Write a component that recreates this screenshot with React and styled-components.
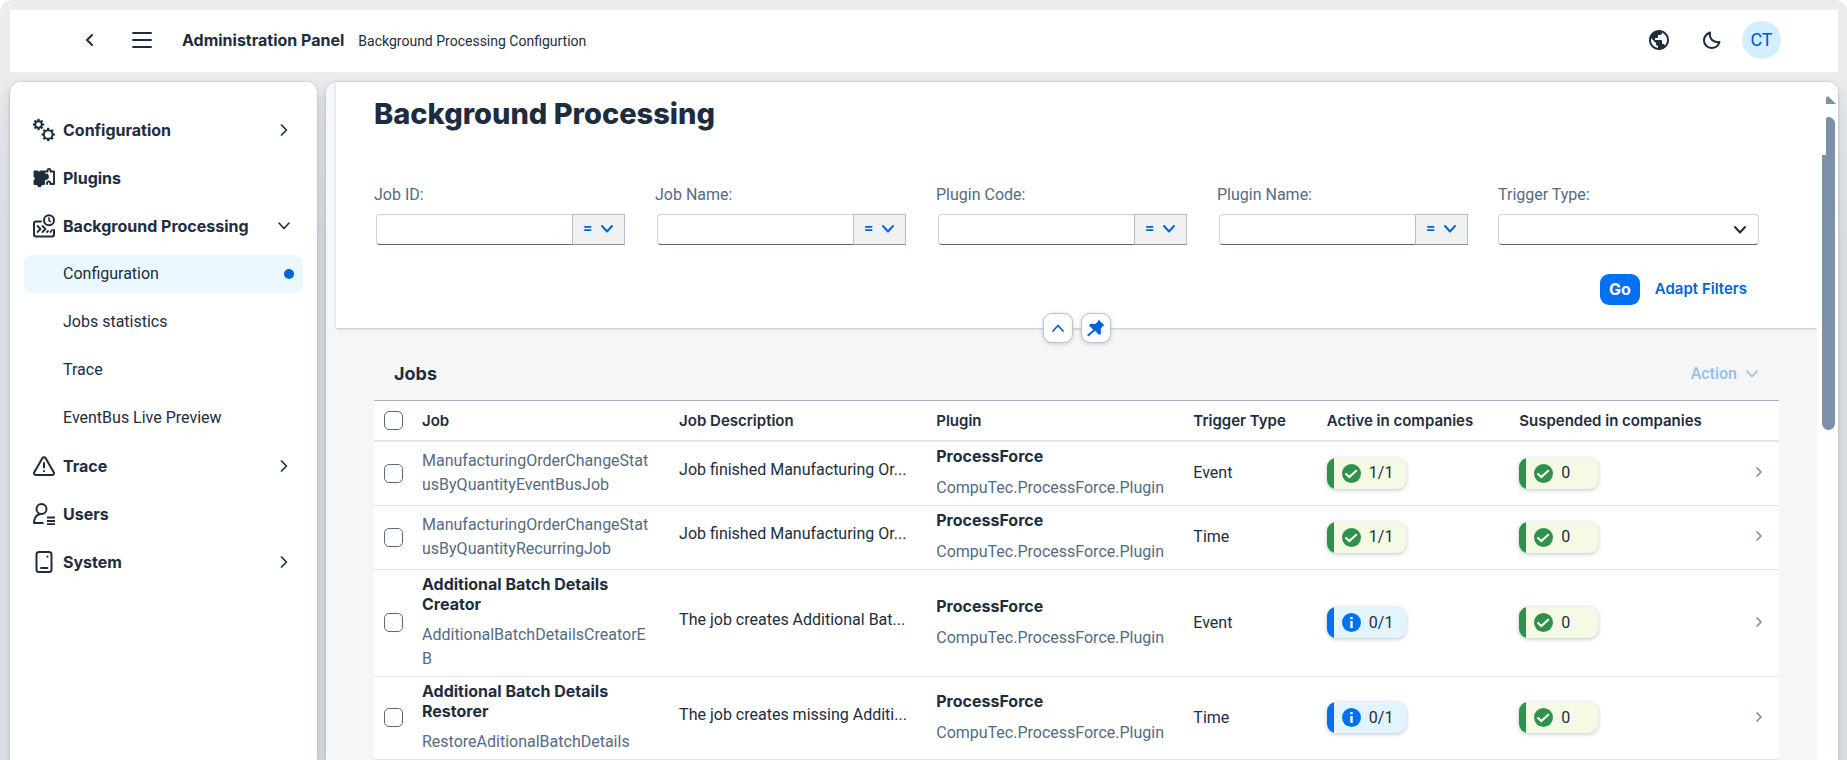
import React from 'react';
import styled, { createGlobalStyle, css } from 'styled-components';

const strongFont = 'Inter, Roboto, "Liberation Sans", sans-serif';

const Global = createGlobalStyle`
  *, *::before, *::after { box-sizing: border-box; }
  html, body, #root { height: 100%; }
  body {
    margin: 0;
    overflow: hidden;
    background: #fff;
    color: #1d2d3e;
    font: 400 16px/24px Roboto, "Liberation Sans", sans-serif;
  }
  button, input, select { font: inherit; color: inherit; }
`;

const Shell = styled.div`
  height: 100%;
  display: flex;
  flex-direction: column;
  gap: 10px;
  padding: 10px 9px 0 10px;
  background: linear-gradient(#eaecee 72px, #dfe3e6 240px);
  border-radius: 12px 12px 0 0;
`;

const TopBar = styled.header`
  flex: none;
  height: 62px;
  display: flex;
  align-items: center;
  gap: 25px;
  padding: 0 57px 2px 65px;
  background: #fff;
`;

const IconButton = styled.button`
  display: grid;
  place-items: center;
  width: 28px;
  height: 28px;
  padding: 0;
  border: 0;
  background: none;
  color: #1d2d3e;
`;

const Titles = styled.div`
  flex: 1;
  display: flex;
  align-items: baseline;
  gap: 14px;
  margin-left: 1px;
`;

const AppTitle = styled.span`
  font-family: ${strongFont};
  font-size: 16px;
  font-weight: 700;
`;

const SubTitle = styled.span`
  font-size: 14px;
`;

const Avatar = styled.button`
  width: 39px;
  height: 38px;
  margin-left: -9px;
  padding: 0;
  border: 0;
  border-radius: 50%;
  background: #d1efff;
  color: #0057d2;
  font-size: 18px;
`;

const Body = styled.div`
  flex: 1;
  min-height: 0;
  display: flex;
  gap: 9px;
`;

const Side = styled.nav`
  flex: none;
  width: 307px;
  padding: 29px 14px;
  background: #fff;
  border-radius: 10px 10px 0 0;
  box-shadow: 0 0 3px rgba(34, 53, 72, 0.2), 0 8px 16px rgba(34, 53, 72, 0.16);
`;

const NavList = styled.ul`
  display: flex;
  flex-direction: column;
  gap: 10px;
  margin: 0;
  padding: 0;
  list-style: none;
`;

const NavLink = styled.a`
  display: flex;
  align-items: center;
  gap: 8px;
  height: 38px;
  padding: 0 9px;
  border-radius: 8px;
  color: inherit;
  text-decoration: none;
  background: ${(p) => (p.$selected ? '#ebf8ff' : 'none')};
  ${(p) => !p.$sub && css`
    font-family: ${strongFont};
    font-weight: 700;
    line-height: 22px;
  `}
`;

const NavIcon = styled.span`
  flex: none;
  width: 22px;
  height: 24px;
  display: grid;
  place-items: center;
`;

const NavText = styled.span`
  flex: 1;
`;

const Dot = styled.span`
  width: 10px;
  height: 10px;
  border-radius: 50%;
  background: #0064d9;
`;

const ChevronSlot = styled.span`
  display: grid;
  place-items: center;
  width: 20px;
`;

const Panel = styled.main`
  flex: 1;
  min-width: 0;
  display: flex;
  padding-left: 10px;
  background: #f5f6f7;
  border-radius: 10px 10px 0 0;
  overflow: hidden;
  box-shadow: 0 0 3px rgba(34, 53, 72, 0.2), 0 8px 16px rgba(34, 53, 72, 0.16);
`;

const Page = styled.div`
  flex: 1;
  min-width: 0;
  display: flex;
  flex-direction: column;
`;

const Track = styled.div`
  flex: none;
  position: relative;
  width: 21px;
  padding: 14px 3px 0 5px;
  background: #fff;
  display: flex;
  flex-direction: column;
  align-items: flex-end;
`;

const Arrow = styled.svg`
  display: block;
  flex: none;
  margin-right: -1px;
`;

const ThumbTop = styled.div`
  flex: none;
  width: 9px;
  height: 38px;
  margin-top: 13px;
  background: #7b91a8;
  border-radius: 3px 8px 0 0;
`;

const Thumb = styled.div`
  flex: none;
  width: 13px;
  height: 275px;
  background: #7b91a8;
  border-radius: 0 0 7px 7px;
`;

const FilterHeader = styled.section`
  position: relative;
  flex: none;
  height: 246px;
  padding: 12px 38px 0;
  background: #fff;
  box-shadow: 0 1px 2px rgba(34, 53, 72, 0.25);
`;

const Heading = styled.h1`
  margin: 0;
  font-family: ${strongFont};
  font-size: 29px;
  line-height: 40px;
  font-weight: 800;
`;

const Filters = styled.div`
  display: grid;
  grid-template-columns: repeat(5, minmax(0, 1fr));
  margin-top: 49px;
`;

const Field = styled.div`
  display: flex;
  flex-direction: column;
  gap: 7px;
  color: #556b82;
`;

const InputGroup = styled.div`
  display: flex;
  height: 31px;
  margin: 0 30px 0 2px;
`;

const TextInput = styled.input`
  flex: 1;
  min-width: 0;
  padding: 0 8px;
  border: 1px solid #ccd4dc;
  border-right: 0;
  border-bottom-color: #556b82;
  border-radius: 4px 0 0 4px;
  background: #fff;
  outline: 0;
`;

const Operator = styled.button`
  flex: none;
  width: 53px;
  display: flex;
  align-items: center;
  justify-content: center;
  gap: 8px;
  padding: 0 0 2px;
  border: 1px solid #b5bfc9;
  border-bottom-color: #7b91a8;
  background: #eff1f2;
  color: #0064d9;
  font-weight: 700;
`;

const SelectWrap = styled.div`
  display: grid;
  align-items: center;
  height: 31px;
  margin-right: 20px;
  > * { grid-area: 1 / 1; }
  > svg { justify-self: end; margin-right: 12px; pointer-events: none; color: #1d2d3e; }
`;

const Select = styled.select`
  appearance: none;
  width: 100%;
  height: 31px;
  padding: 0 32px 0 8px;
  border: 1px solid #ccd4dc;
  border-bottom-color: #556b82;
  border-radius: 4px;
  background: #fff;
  outline: 0;
`;

const Actions = styled.div`
  display: flex;
  justify-content: flex-end;
  align-items: center;
  gap: 15px;
  margin-top: 29px;
  padding-right: 32px;
`;

const GoButton = styled.button`
  width: 40px;
  height: 31px;
  padding: 0 0 2px;
  border: 0;
  border-radius: 9px;
  background: #0070f2;
  color: #fff;
  font-family: ${strongFont};
  font-weight: 700;
`;

const LinkButton = styled.button`
  padding: 0 0 2px;
  border: 0;
  background: none;
  color: #0064d9;
  font-family: ${strongFont};
  font-size: 15px;
  font-weight: 600;
`;

const HeaderToggles = styled.div`
  position: absolute;
  left: 0;
  right: 0;
  bottom: -15px;
  display: flex;
  justify-content: center;
  gap: 8px;
`;

const ToggleButton = styled.button`
  display: grid;
  place-items: center;
  width: 30px;
  height: 30px;
  padding: 0;
  border: 1px solid #bcc3ca;
  border-radius: 9px;
  background: #fff;
  color: #0064d9;
  box-shadow: 0 1px 4px rgba(85, 107, 130, 0.3);
`;

const JobsSection = styled.section`
  padding: 24px 38px 0;
`;

const Toolbar = styled.div`
  display: flex;
  align-items: center;
  justify-content: space-between;
  height: 48px;
  padding: 0 20px 4px;
`;

const Subheading = styled.h2`
  margin: 0;
  font-family: ${strongFont};
  font-size: 18px;
  line-height: 24px;
  font-weight: 700;
`;

const ActionButton = styled.button`
  display: flex;
  align-items: center;
  gap: 8px;
  padding: 0;
  border: 0;
  background: none;
  color: #97bdef;
  font-weight: 500;
`;

const Table = styled.table`
  width: 100%;
  table-layout: fixed;
  border-collapse: separate;
  border-spacing: 0;
  background: #fff;
  border-top: 1px solid #a3b1bf;
`;

const Col = styled.col`
  width: ${(p) => p.$w};
`;

const Th = styled.th`
  height: 41px;
  padding: 0 8px;
  border-bottom: 2px solid #e5e5e5;
  text-align: left;
  font-family: ${strongFont};
  font-size: 15px;
  font-weight: 600;
  white-space: nowrap;
`;

const Td = styled.td`
  padding: 4px 16px 5px 8px;
  border-bottom: 1px solid #e5e5e5;
  vertical-align: middle;
`;

const PluginTd = styled(Td)`
  padding-right: 8px;
`;

const NavTd = styled(Td)`
  padding: 0 16px 4px 0;
  text-align: right;
  color: #7b91a8;
  svg { display: inline-block; vertical-align: middle; }
`;

const Checkbox = styled.input`
  appearance: none;
  display: block;
  width: 19px;
  height: 19px;
  margin: 0 2px;
  border: 1px solid #556b82;
  border-radius: 5px;
  background: #fff;
`;

const Name = styled.div`
  margin-bottom: ${(p) => (p.$wrap ? 9 : 10)}px;
  font-family: ${strongFont};
  font-weight: 700;
  line-height: 20px;
`;

const Code = styled.div`
  color: #556b82;
  overflow-wrap: anywhere;
  line-height: 24px;
`;

const Description = styled.div`
  margin-bottom: 6px;
  white-space: nowrap;
`;

const tones = {
  good: css`
    background: #f5fae5;
    &::before { background: #30914c; }
    svg { color: #30914c; }
  `,
  info: css`
    background: #e1f4ff;
    &::before { background: #0070f2; }
    svg { color: #0070f2; }
  `,
};

const Badge = styled.span`
  display: flex;
  align-items: center;
  gap: 8px;
  width: 79px;
  height: 31px;
  border-radius: 9px;
  overflow: hidden;
  box-shadow: 0 1px 4px rgba(34, 53, 72, 0.3);
  &::before { content: ''; align-self: stretch; width: 7px; }
  ${(p) => tones[p.$tone]}
`;

const Stroke = ({ size = 16, width = 2, children, h }) => (
  <svg width={size} height={h || size} viewBox={`0 0 ${size} ${h || size}`} fill="none" stroke="currentColor" strokeWidth={width} strokeLinecap="round" strokeLinejoin="round" aria-hidden="true">
    {children}
  </svg>
);

const ChevronDown = ({ width = 2 }) => (
  <Stroke size={14} h={10} width={width}><path d="M2 2l5 5.500 5-5.500" /></Stroke>
);
const ChevronUp = () => (
  <Stroke size={14} h={10} width={1.8}><path d="M2 8l5-5.500L12 8" /></Stroke>
);
const ChevronRight = ({ small }) => small ? (
  <Stroke size={8} h={12} width={1.7}><path d="M2 2l4 4-4 4" /></Stroke>
) : (
  <Stroke size={10} h={14} width={1.7}><path d="M2.500 2l5 5-5 5" /></Stroke>
);

const GearPath = ({ cx, cy, r }) => (
  <g>
    <circle cx={cx} cy={cy} r={r} strokeWidth="1.9" />
    {Array.from({ length: 8 }, (_, i) => {
      const a = (i * Math.PI) / 4;
      return (
        <path key={i} strokeWidth="2.200" strokeLinecap="butt"
          d={`M${cx + Math.cos(a) * r} ${cy + Math.sin(a) * r}L${cx + Math.cos(a) * (r + 2.4)} ${cy + Math.sin(a) * (r + 2.4)}`} />
      );
    })}
  </g>
);

const GearsIcon = () => (
  <Stroke size={22} h={24}><GearPath cx={5.5} cy={6.5} r={3.3} /><GearPath cx={15.2} cy={16.5} r={4.3} /></Stroke>
);
const PuzzleIcon = () => (
  <Stroke size={22} h={22} width={1.9}>
    <path fill="currentColor" d="M1.500 4.500h3c0 1.500 3 1.500 3 0H11v3.200c2.500-1 4 .3 4 2s-1.500 3-4 2V17H8c.5 3-3.500 3-3 0H1.500v-3.500c1.800-.5 1.800-3.500 0-4z" />
    <path d="M12 4.500h2.500c-.5-3.500 3.500-3.500 3 0H21V17h-3.500c0-3.500-3.500-3.500-3.500 0" />
  </Stroke>
);
const ProcessIcon = () => (
  <Stroke size={22} h={24}>
    <path d="M8 7.500H3a2 2 0 0 0-2 2V20.500a2 2 0 0 0 2 2h16a2 2 0 0 0 2-2V16" />
    <circle cx="16" cy="6.200" r="5" />
    <path d="M16 3.700V6.700l1.500 1" strokeWidth="1.500" />
    <path d="M4.500 12l3 3-3 3M9.500 12l3 3-3 3M14 18l1-1M17.500 18l1.500-2" strokeWidth="1.800" />
  </Stroke>
);
const WarnIcon = () => (
  <Stroke size={22} h={20}>
    <path d="M9.300 2.200a2 2 0 0 1 3.400 0l8 14a1.800 1.800 0 0 1-1.600 2.800H2.900a1.800 1.800 0 0 1-1.600-2.800z" />
    <path d="M11 7v4.500M11 15v.2" />
  </Stroke>
);
const UsersIcon = () => (
  <Stroke size={22} h={22}>
    <circle cx="8.500" cy="6" r="5" />
    <path d="M10.500 20H1c0-5 2-8 6-9" strokeLinecap="butt" />
    <path d="M14 14.500h8M14 18h8M14 21.200h8" strokeLinecap="butt" strokeWidth="1.900" />
  </Stroke>
);
const SystemIcon = () => (
  <Stroke size={22} h={22}>
    <rect x="3.500" y="1" width="15" height="20" rx="2.500" />
    <path d="M8 17h6.500M14.500 5.500v.2" strokeWidth="1.900" />
  </Stroke>
);

const GlobeIcon = () => (
  <svg width="24" height="24" viewBox="0 0 24 24" fill="currentColor" aria-hidden="true">
    <path d="M12 2C6.480 2 2 6.480 2 12s4.480 10 10 10 10-4.480 10-10S17.520 2 12 2zm-1 17.930c-3.950-.49-7-3.850-7-7.930 0-.62.08-1.210.21-1.790L9 15v1c0 1.100.9 2 2 2v1.930zm6.900-2.540c-.26-.81-1-1.390-1.900-1.390h-1v-3c0-.55-.45-1-1-1H8v-2h2c.55 0 1-.45 1-1V7h2c1.100 0 2-.9 2-2v-.41c2.930 1.190 5 4.060 5 7.410 0 2.080-.8 3.970-2.100 5.390z" />
  </svg>
);
const MoonIcon = () => (
  <Stroke size={20}><path d="M8 2.500C4.500 4 2 6.500 2 10.500a7.500 7.500 0 0 0 7.500 7.500c4 0 7-2.500 8-6-6 1-10.500-3-9.500-9.500z" /></Stroke>
);
const PinIcon = () => (
  <svg width="18" height="18" viewBox="0 0 18 18" fill="currentColor" aria-hidden="true">
    <path d="M11.500.5 17.500 6.500l-2 .8-1.700 2.700.2 4.500-1.800 1.500-4.300-4.300L1.500 17.500 0 16l6.300-5.300L2 6.500 3.500 4.700l4.500.3 2.700-1.900z" />
  </svg>
);
const CheckBadge = () => (
  <svg width="19" height="19" viewBox="0 0 19 19" aria-hidden="true">
    <circle cx="9.500" cy="9.500" r="9.500" fill="currentColor" />
    <path d="M3.500 9.500l3.800 3.500 7.500-6.800" fill="none" stroke="#fff" strokeWidth="2.200" />
  </svg>
);
const InfoBadge = () => (
  <svg width="19" height="19" viewBox="0 0 19 19" aria-hidden="true">
    <circle cx="9.500" cy="9.500" r="9.500" fill="currentColor" />
    <path d="M9.500 8v7M9.500 4v2.300" fill="none" stroke="#fff" strokeWidth="2.400" />
  </svg>
);

const navItems = [
  { text: 'Configuration', icon: <GearsIcon />, end: 'right' },
  { text: 'Plugins', icon: <PuzzleIcon /> },
  { text: 'Background Processing', icon: <ProcessIcon />, end: 'down' },
  { text: 'Configuration', sub: true, selected: true },
  { text: 'Jobs statistics', sub: true },
  { text: 'Trace', sub: true },
  { text: 'EventBus Live Preview', sub: true },
  { text: 'Trace', icon: <WarnIcon />, end: 'right' },
  { text: 'Users', icon: <UsersIcon /> },
  { text: 'System', icon: <SystemIcon />, end: 'right' },
];

const filters = ['Job ID:', 'Job Name:', 'Plugin Code:', 'Plugin Name:'];

const jobs = [
  { code: 'ManufacturingOrderChangeStatusByQuantityEventBusJob', desc: 'Job finished Manufacturing Or...', trigger: 'Event', active: '1/1', tone: 'good' },
  { code: 'ManufacturingOrderChangeStatusByQuantityRecurringJob', desc: 'Job finished Manufacturing Or...', trigger: 'Time', active: '1/1', tone: 'good' },
  { name: 'Additional Batch Details Creator', code: 'AdditionalBatchDetailsCreatorEB', desc: 'The job creates Additional Bat...', trigger: 'Event', active: '0/1', tone: 'info' },
  { name: 'Additional Batch Details Restorer', code: 'RestoreAditionalBatchDetails', desc: 'The job creates missing Additi...', trigger: 'Time', active: '0/1', tone: 'info' },
];

function SideNav() {
  return (
    <Side aria-label="Main">
      <NavList>
        {navItems.map((n, i) => (
          <li key={i}>
            <NavLink href="#" $sub={n.sub} $selected={n.selected}>
              <NavIcon>{n.icon}</NavIcon>
              <NavText>{n.text}</NavText>
              {n.end && <ChevronSlot>{n.end === 'right' ? <ChevronRight /> : <ChevronDown width={1.6} />}</ChevronSlot>}
              {n.selected && <Dot />}
            </NavLink>
          </li>
        ))}
      </NavList>
    </Side>
  );
}

function FilterBar() {
  return (
    <FilterHeader>
      <Heading>Background Processing</Heading>
      <Filters>
        {filters.map((label, i) => (
          <Field key={label}>
            <label htmlFor={`filter-${i}`}>{label}</label>
            <InputGroup>
              <TextInput id={`filter-${i}`} type="text" />
              <Operator type="button" aria-label="Operator">=<ChevronDown /></Operator>
            </InputGroup>
          </Field>
        ))}
        <Field>
          <label htmlFor="trigger">Trigger Type:</label>
          <SelectWrap>
            <Select id="trigger" defaultValue=""><option value="" /></Select>
            <ChevronDown />
          </SelectWrap>
        </Field>
      </Filters>
      <Actions>
        <GoButton type="button">Go</GoButton>
        <LinkButton type="button">Adapt Filters</LinkButton>
      </Actions>
      <HeaderToggles>
        <ToggleButton type="button" aria-label="Collapse header"><ChevronUp /></ToggleButton>
        <ToggleButton type="button" aria-label="Pin header"><PinIcon /></ToggleButton>
      </HeaderToggles>
    </FilterHeader>
  );
}

function JobsTable() {
  return (
    <Table>
      <colgroup>
        <Col $w="40px" /><Col $w="18.300%" /><Col $w="18.300%" /><Col $w="18.300%" />
        <Col $w="9.500%" /><Col $w="13.700%" /><Col /><Col $w="40px" />
      </colgroup>
      <thead>
        <tr>
          <Th><Checkbox type="checkbox" aria-label="Select all" /></Th>
          <Th>Job</Th><Th>Job Description</Th><Th>Plugin</Th><Th>Trigger Type</Th>
          <Th>Active in companies</Th><Th>Suspended in companies</Th><Th />
        </tr>
      </thead>
      <tbody>
        {jobs.map((j) => (
          <tr key={j.code}>
            <Td><Checkbox type="checkbox" aria-label={`Select ${j.code}`} /></Td>
            <Td>
              {j.name && <Name $wrap>{j.name}</Name>}
              <Code>{j.code}</Code>
            </Td>
            <Td><Description>{j.desc}</Description></Td>
            <PluginTd>
              <Name>ProcessForce</Name>
              <Code>CompuTec.ProcessForce.Plugin</Code>
            </PluginTd>
            <Td>{j.trigger}</Td>
            <Td><Badge $tone={j.tone}>{j.tone === 'good' ? <CheckBadge /> : <InfoBadge />}{j.active}</Badge></Td>
            <Td><Badge $tone="good"><CheckBadge />0</Badge></Td>
            <NavTd><ChevronRight small /></NavTd>
          </tr>
        ))}
      </tbody>
    </Table>
  );
}

export default function App() {
  return (
    <>
      <Global />
      <Shell>
        <TopBar>
          <IconButton type="button" aria-label="Back"><Stroke size={10} h={16}><path d="M8 3L3 8l5 5" /></Stroke></IconButton>
          <IconButton type="button" aria-label="Menu"><Stroke size={20} h={16}><path d="M1 1h18M1 8h18M1 15h18" /></Stroke></IconButton>
          <Titles><AppTitle>Administration Panel</AppTitle><SubTitle>Background Processing Configurtion</SubTitle></Titles>
          <IconButton type="button" aria-label="Language"><GlobeIcon /></IconButton>
          <IconButton type="button" aria-label="Theme"><MoonIcon /></IconButton>
          <Avatar type="button">CT</Avatar>
        </TopBar>
        <Body>
          <SideNav />
          <Panel>
            <Page>
              <FilterBar />
              <JobsSection>
                <Toolbar>
                  <Subheading>Jobs</Subheading>
                  <ActionButton type="button">Action<ChevronDown width={1.6} /></ActionButton>
                </Toolbar>
                <JobsTable />
              </JobsSection>
            </Page>
            <Track aria-hidden="true">
              <Arrow width="10" height="8" viewBox="0 0 10 8"><path d="M0 8V2l2-2 8 8z" fill="#7b91a8" /></Arrow>
              <ThumbTop />
              <Thumb />
            </Track>
          </Panel>
        </Body>
      </Shell>
    </>
  );
}
